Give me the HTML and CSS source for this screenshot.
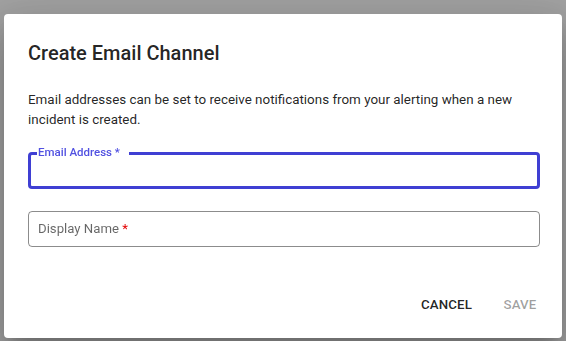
FILE: index.html
```html
<!DOCTYPE html>
<html lang="en">
<head>
    <meta charset="UTF-8">
    <meta name="viewport" content="width=device-width, initial-scale=1.0">
    <title>Create Email Channel</title>
    <link rel="stylesheet" href="styles.css">
</head>
<body>
    <div class="dialog">
        <h2 class="dialog-title">Create Email Channel</h2>
        <div class="dialog-content">
            <p class="dialog-text">Email addresses can be set to receive notifications from your alerting when a new incident is created.</p>
            <div class="field field-focused">
                <fieldset class="outline">
                    <legend><span>Email Address *</span></legend>
                </fieldset>
                <label class="field-label shrink">Email Address *</label>
                <input class="field-input" type="text" autofocus>
            </div>
            <div class="field">
                <fieldset class="outline">
                    <legend></legend>
                </fieldset>
                <label class="field-label">Display Name <span class="req">*</span></label>
                <input class="field-input" type="text">
            </div>
        </div>
        <div class="dialog-actions">
            <button class="btn">Cancel</button>
            <button class="btn" disabled>Save</button>
        </div>
    </div>
</body>
</html>
```

FILE: styles.css
```css
* { box-sizing: border-box; }
html, body {
    margin: 0;
    height: 100%;
}
body {
    font-family: 'Roboto', 'Liberation Sans', sans-serif;
    background: #a2a2a2;
    padding: 14px 4px 3px 4px;
    overflow: hidden;
}
.dialog {
    background: #fff;
    border-radius: 4px;
    height: 324px;
    box-shadow: 0 11px 15px -7px rgba(0,0,0,0.2), 0 24px 38px 3px rgba(0,0,0,0.14), 0 9px 46px 8px rgba(0,0,0,0.12);
    display: flex;
    flex-direction: column;
}
.dialog-title {
    margin: 0;
    padding: 23px 24px 0 24px;
    font-size: 20px;
    line-height: 32px;
    font-weight: 500;
    color: rgba(0,0,0,0.87);
}
.dialog-content {
    padding: 21px 22px 0 24px;
}
.dialog-text {
    margin: 0 0 23px 0;
    font-size: 13.4px;
    line-height: 20px;
    color: rgba(0,0,0,0.87);
}
.field {
    position: relative;
    height: 36px;
    margin-bottom: 22px;
}
.outline {
    position: absolute;
    inset: -5px 0 0 0;
    margin: 0;
    padding: 0 8px;
    border: 1px solid rgba(0,0,0,0.45);
    border-radius: 4px;
    pointer-events: none;
}
.outline legend {
    padding: 0;
    font-size: 11.5px;
    line-height: 11px;
    height: 11px;
    visibility: hidden;
    max-width: 0.01px;
}
.outline legend span {
    padding: 0 5px;
    font-weight: 500;
}
.field-focused .outline {
    border: 3px solid #3f3fd3;
    padding: 0 6px;
}
.field-focused .outline legend {
    max-width: 100%;
}
.field-label {
    position: absolute;
    left: 10px;
    top: 9px;
    font-size: 13.2px;
    line-height: 17px;
    color: rgba(0,0,0,0.6);
}
.field-label.shrink {
    top: -8px;
    left: 10px;
    font-size: 11.5px;
    line-height: 14px;
    font-weight: 500;
    color: #5151e1;
}
.req { color: #e30000; }
.field-input {
    width: 100%;
    height: 100%;
    border: none;
    outline: none;
    background: transparent;
    padding: 0 10px;
    font: inherit;
    font-size: 14px;
    caret-color: transparent;
}
.dialog-actions {
    margin-top: auto;
    display: flex;
    justify-content: flex-end;
    gap: 8px;
    padding: 8px 10px 15px 8px;
}
.btn {
    min-width: 64px;
    padding: 6px 8px;
    border: none;
    background: transparent;
    font-family: inherit;
    font-size: 13.3px;
    line-height: 24px;
    font-weight: 500;
    letter-spacing: 0.1px;
    text-transform: uppercase;
    color: rgba(0,0,0,0.87);
    border-radius: 4px;
    cursor: pointer;
}
.btn:disabled {
    color: rgba(0,0,0,0.38);
    cursor: default;
}
```
